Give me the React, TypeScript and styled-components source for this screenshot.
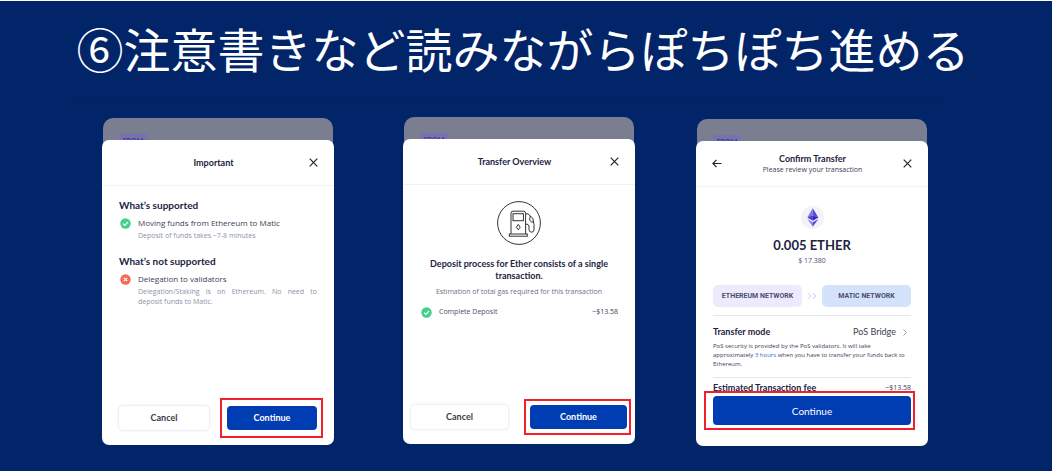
import React from "react";
import styled, { createGlobalStyle } from "styled-components";

const textFont = `"Open Sans", "Noto Sans", sans-serif`;

const GlobalStyle = createGlobalStyle`
  *, *::before, *::after { box-sizing: border-box; }
  body { margin: 0; background: #ffffff; }
  h1, h2, h3, p { margin: 0; }
  button { font: inherit; color: inherit; padding: 0; border: 0; background: none; cursor: pointer; }
`;

const Page = styled.main`
  min-height: 100vh;
  border-top: 1px solid #ffffff;
  border-right: 1px solid #ffffff;
  background: #022468;
  background-clip: padding-box;
  font-family: Lato, "Noto Sans CJK JP", sans-serif;
  font-size: 9px;
  line-height: 14px;
  color: #1d2340;
`;

const Title = styled.h1`
  padding: 19px 6px 25px 0;
  text-align: center;
  font-family: "Noto Sans CJK JP", sans-serif;
  font-size: 47px;
  line-height: 56px;
  font-weight: 400;
  color: #ffffff;
`;

const Rule = styled.hr`
  height: 1px;
  margin: 0 109px 15px 70px;
  border: 0;
  background: #0b1f52;
`;

const Screens = styled.div`
  display: grid;
  grid-template-columns: 232fr 69fr 232fr 61fr 232fr;
  min-height: 329px;
  padding: 0 124px 0 102px;
`;

const Phone = styled.section<{ $column: number; $align: string }>`
  grid-column: ${(p) => p.$column};
  align-self: ${(p) => p.$align};
  min-width: 0;
`;

const Backdrop = styled.div`
  height: 34px;
  margin: 0 1px -12px;
  padding: 16px 16px 0;
  border-radius: 10px 10px 0 0;
  background: #7b7e91;
`;

const Tag = styled.span`
  display: block;
  width: 28px;
  border-radius: 2px 2px 0 0;
  background: #7673ab;
  font-size: 7px;
  line-height: 14px;
  font-weight: 700;
  text-align: center;
  color: #3d34a0;
`;

const Sheet = styled.div`
  position: relative;
  display: flex;
  flex-direction: column;
  min-height: 305px;
  border-radius: 7px;
  background: #ffffff;
`;

const Header = styled.header`
  display: flex;
  align-items: center;
  height: 46px;
  padding: 0 16px;
  border-bottom: 1px solid #f1f2f5;
`;

const Heading = styled.div`
  flex: 1;
  text-align: center;
`;

const HeadingText = styled.h2`
  font-size: 9px;
  line-height: 12px;
  font-weight: 700;
`;

const Subheading = styled.p`
  font-family: ${textFont};
  font-size: 7px;
  line-height: 10px;
  color: #3b4156;
`;

const IconButton = styled.button`
  display: flex;
  color: #23262f;
`;

const Body = styled.div`
  display: flex;
  flex: 1;
  flex-direction: column;
  padding: 0 17px;
`;

const Group = styled.section`
  padding-top: 12px;

  & + & {
    padding-top: 13px;
  }
`;

const GroupTitle = styled.h3<{ $small?: boolean }>`
  font-size: ${(p) => (p.$small ? 9 : 10)}px;
  line-height: 14px;
  font-weight: 700;
`;

const Item = styled.div`
  display: grid;
  grid-template-columns: 11px 1fr;
  column-gap: 7px;
  align-items: center;
  margin-top: 4px;
  padding-left: 1px;
  font-family: ${textFont};
  font-size: 8px;
  color: #3b4156;
`;

const Note = styled.p`
  grid-column: 2;
  margin-top: 1px;
  font-size: 7px;
  line-height: 10px;
  text-align: justify;
  color: #8b93a9;
`;

const GasIcon = styled.svg`
  align-self: center;
  width: 44px;
  height: 44px;
  margin: 16px 0 13px;
`;

const Statement = styled.h3`
  padding: 0 10px;
  font-size: 9px;
  line-height: 12px;
  font-weight: 700;
  text-align: center;
`;

const Estimate = styled.p`
  margin-top: 4px;
  font-family: ${textFont};
  font-size: 7px;
  line-height: 12px;
  text-align: center;
  color: #6c738a;
`;

const CostRow = styled.div`
  display: flex;
  align-items: center;
  gap: 7px;
  margin-top: 7px;
  padding-left: 1px;
  font-family: ${textFont};
  font-size: 7px;
  color: #4a5068;
`;

const Price = styled.span`
  margin-left: auto;
  font-family: ${textFont};
  font-size: 7px;
  color: #3b4156;
`;

const Actions = styled.footer<{ $gap: number; $pad: number }>`
  display: grid;
  grid-template-columns: 1fr 1fr;
  gap: ${(p) => p.$gap}px;
  padding: 0 ${(p) => p.$pad}px 15px;
`;

const Action = styled.button<{ $primary?: boolean; $large?: boolean }>`
  width: 100%;
  height: ${(p) => (p.$large ? 29 : 24)}px;
  border-radius: 4px;
  background: ${(p) => (p.$primary ? "#003cb2" : "#ffffff")};
  box-shadow: ${(p) => (p.$primary ? "none" : "0 0 3px rgba(30, 35, 60, 0.18)")};
  font-size: ${(p) => (p.$large ? 10 : 9)}px;
  font-weight: ${(p) => (p.$large ? 400 : 700)};
  color: ${(p) => (p.$primary ? "#ffffff" : "#3b3e48")};
`;

const Highlight = styled.div<{ $inset: string }>`
  position: relative;

  &::after {
    content: "";
    position: absolute;
    inset: ${(p) => p.$inset};
    border: 2px solid #f0202c;
    pointer-events: none;
  }
`;

const Coin = styled.svg`
  align-self: center;
  width: 23px;
  height: 23px;
  margin-top: 19px;
`;

const Amount = styled.p`
  margin-top: 8px;
  font-size: 13px;
  line-height: 16px;
  font-weight: 700;
  text-align: center;
`;

const Fiat = styled.p`
  margin-top: 2px;
  font-family: ${textFont};
  font-size: 7px;
  line-height: 12px;
  text-align: center;
  color: #4a5068;
`;

const Route = styled.div`
  display: flex;
  align-items: center;
  justify-content: space-between;
  margin-top: 18px;
`;

const Network = styled.span<{ $tone: string }>`
  flex: 0 0 45%;
  border-radius: 5px;
  background: ${(p) => p.$tone};
  font-family: Roboto, sans-serif;
  font-size: 7px;
  line-height: 22px;
  font-weight: 700;
  text-align: center;
  white-space: nowrap;
  color: #4a4e6c;
`;

const Divider = styled.hr`
  width: 100%;
  height: 1px;
  margin: 8px 0 0;
  border: 0;
  background: #e6e8ec;
`;

const Row = styled.div<{ $space: number }>`
  display: flex;
  align-items: center;
  justify-content: space-between;
  margin-top: ${(p) => p.$space}px;
`;

const ModeButton = styled.button`
  display: flex;
  align-items: center;
  gap: 7px;
  padding-right: 4px;
  font-size: 9px;
  line-height: 14px;
  color: #3b4156;
`;

const Details = styled.p`
  margin-top: 3px;
  font-family: ${textFont};
  font-size: 6px;
  line-height: 9px;
  color: #3b4156;
`;

const Link = styled.a`
  color: #2f66e0;
  text-decoration: none;
`;

const Confirm = styled.div`
  margin: 1px 0 21px;
`;

const Close = () => (
  <IconButton aria-label="Close">
    <svg width="9" height="9" viewBox="0 0 9 9" fill="none" stroke="currentColor" strokeWidth="1.2">
      <path d="M0.7 0.7L8.3 8.3M8.3 0.7L0.7 8.3" />
    </svg>
  </IconButton>
);

const Back = () => (
  <IconButton aria-label="Back">
    <svg width="10" height="9" viewBox="0 0 10 9" fill="none" stroke="currentColor" strokeWidth="1.2">
      <path d="M9.6 4.5H0.9M4.5 0.8L0.9 4.5L4.5 8.2" />
    </svg>
  </IconButton>
);

const Status = ({ ok }: { ok?: boolean }) => (
  <svg width="11" height="11" viewBox="0 0 11 11" fill="none" stroke="#ffffff" strokeWidth="1.2">
    <circle cx="5.5" cy="5.5" r="5.2" fill={ok ? "#45d08a" : "#f46b52"} stroke="none" />
    <path d={ok ? "M3 5.6L4.8 7.3L8 4" : "M3.8 3.8L7.2 7.2M7.2 3.8L3.8 7.2"} />
  </svg>
);

const Screen = (props: { column: number; align: string; children: React.ReactNode }) => (
  <Phone $column={props.column} $align={props.align}>
    <Backdrop>
      <Tag>FROM</Tag>
    </Backdrop>
    <Sheet>{props.children}</Sheet>
  </Phone>
);

export default function App() {
  return (
    <Page lang="ja">
      <GlobalStyle />
      <Title>⑥注意書きなど読みながらぽちぽち進める</Title>
      <Rule />
      <Screens lang="en">
        <Screen column={1} align="center">
          <Header>
            <Heading>
              <HeadingText>Important</HeadingText>
            </Heading>
            <Close />
          </Header>
          <Body>
            <Group>
              <GroupTitle>What’s supported</GroupTitle>
              <Item>
                <Status ok />
                <span>Moving funds from Ethereum to Matic</span>
                <Note>Deposit of funds takes ~7-8 minutes</Note>
              </Item>
            </Group>
            <Group>
              <GroupTitle>What’s not supported</GroupTitle>
              <Item>
                <Status />
                <span>Delegation to validators</span>
                <Note>Delegation/Staking is on Ethereum. No need to deposit&nbsp;funds to Matic.</Note>
              </Item>
            </Group>
          </Body>
          <Actions $gap={18} $pad={17}>
            <Action>Cancel</Action>
            <Highlight $inset="-8px -6px -8px -7px">
              <Action $primary>Continue</Action>
            </Highlight>
          </Actions>
        </Screen>

        <Screen column={3} align="start">
          <Header>
            <Heading>
              <HeadingText>Transfer Overview</HeadingText>
            </Heading>
            <Close />
          </Header>
          <Body>
            <GasIcon viewBox="0 0 44 44" fill="none" stroke="#333338" strokeWidth="1">
              <circle cx="22" cy="22" r="21.4" />
              <path d="M14 33V12.2Q14 10.2 16 10.2H26.6Q28.6 10.2 28.6 12.2V33" />
              <rect x="12.3" y="33" width="18" height="2.2" />
              <rect x="16" y="12.7" width="10.4" height="7" />
              <path d="M21.3 23.4L23.2 26.2L21.3 28.8L19.4 26.2Z" />
              <path d="M28.6 13L31 12.8L35.8 17.2L37 23.5V29Q36.8 31.2 34.5 31.2Q32 31 32 28.5V25Q31.8 23 28.6 23" />
              <path d="M33.2 15L32.6 19.2L35 21.4L36.3 20.3" />
            </GasIcon>
            <Statement>Deposit process for Ether consists of a single transaction.</Statement>
            <Estimate>Estimation of total gas required for this transaction</Estimate>
            <CostRow>
              <Status ok />
              <span>Complete Deposit</span>
              <Price>~$13.58</Price>
            </CostRow>
          </Body>
          <Actions $gap={22} $pad={8}>
            <Action>Cancel</Action>
            <Highlight $inset="-6px -4px -6px -6px">
              <Action $primary>Continue</Action>
            </Highlight>
          </Actions>
        </Screen>

        <Screen column={5} align="end">
          <Header>
            <Back />
            <Heading>
              <HeadingText>Confirm Transfer</HeadingText>
              <Subheading>Please review your transaction</Subheading>
            </Heading>
            <Close />
          </Header>
          <Body>
            <Coin viewBox="0 0 23 23">
              <circle cx="11.5" cy="11.5" r="11.5" fill="#f2f3f8" />
              <path d="M11.8 2.2L6.3 11.5L11.8 9.2Z" fill="#7d74e6" />
              <path d="M11.8 2.2L17.4 11.5L11.8 9.2Z" fill="#5a4bd4" />
              <path d="M6.3 11.5L11.8 9.2V14.8Z" fill="#4a3dd0" />
              <path d="M17.4 11.5L11.8 9.2V14.8Z" fill="#3a2ac0" />
              <path d="M6.3 13L11.8 16.2V20.8Z" fill="#8a83ea" />
              <path d="M17.4 13L11.8 16.2V20.8Z" fill="#5546d2" />
            </Coin>
            <Amount>0.005 ETHER</Amount>
            <Fiat>$ 17.380</Fiat>
            <Route>
              <Network $tone="#eeeafe">ETHEREUM NETWORK</Network>
              <svg width="10" height="8" viewBox="0 0 10 8" fill="none" strokeWidth="1">
                <path d="M0.8 1L3.8 4L0.8 7" stroke="#d6cffa" />
                <path d="M5.8 1L8.8 4L5.8 7" stroke="#bcd2fa" />
              </svg>
              <Network $tone="#d5e2fc">MATIC NETWORK</Network>
            </Route>
            <Divider />
            <Row $space={9}>
              <GroupTitle $small>Transfer mode</GroupTitle>
              <ModeButton>
                PoS Bridge
                <svg width="4" height="7" viewBox="0 0 4 7" fill="none" stroke="#8b93a9" strokeWidth="0.9">
                  <path d="M0.5 0.5L3.5 3.5L0.5 6.5" />
                </svg>
              </ModeButton>
            </Row>
            <Details>
              PoS security is provided by the PoS validators. It will take
              <br />
              approximately <Link href="#time">3 hours</Link> when you have to transfer your funds back to Ethereum.
            </Details>
            <Divider />
            <Row $space={3}>
              <GroupTitle $small>Estimated Transaction fee</GroupTitle>
              <Price>~$13.58</Price>
            </Row>
            <Confirm>
              <Highlight $inset="-5px -4px -5px -9px">
                <Action $primary $large>
                  Continue
                </Action>
              </Highlight>
            </Confirm>
          </Body>
        </Screen>
      </Screens>
    </Page>
  );
}
